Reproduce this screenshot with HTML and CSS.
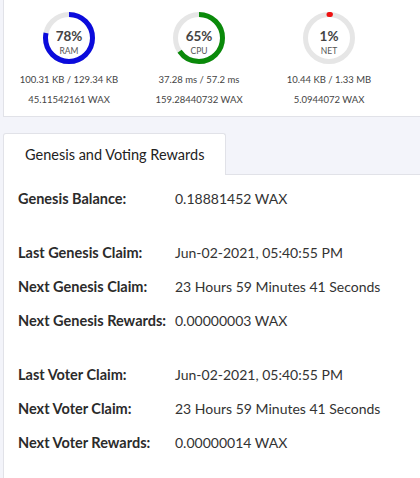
FILE: index.html
```html
<!DOCTYPE html>
<html>
<head>
<meta charset="utf-8">
<link rel="stylesheet" href="styles.css">
</head>
<body>
<div class="page">
  <div class="resources">
    <div class="res">
      <div class="gauge">
        <svg width="54" height="54" viewBox="0 0 54 54">
          <circle cx="27" cy="27" r="23.5" class="track"/>
          <circle cx="27" cy="27" r="23.5" class="arc blue" stroke-dasharray="115.2 147.7" transform="rotate(-90 27 27)"/>
        </svg>
        <div class="gtext"><span class="pct">78%</span><span class="glabel">RAM</span></div>
      </div>
      <div class="line">100.31 KB / 129.34 KB</div>
      <div class="line">45.11542161 WAX</div>
    </div>
    <div class="res">
      <div class="gauge">
        <svg width="54" height="54" viewBox="0 0 54 54">
          <circle cx="27" cy="27" r="23.5" class="track"/>
          <circle cx="27" cy="27" r="23.5" class="arc green" stroke-dasharray="96 147.7" transform="rotate(-90 27 27)"/>
        </svg>
        <div class="gtext"><span class="pct">65%</span><span class="glabel">CPU</span></div>
      </div>
      <div class="line">37.28 ms / 57.2 ms</div>
      <div class="line">159.28440732 WAX</div>
    </div>
    <div class="res">
      <div class="gauge">
        <svg width="54" height="54" viewBox="0 0 54 54">
          <circle cx="27" cy="27" r="23.5" class="track"/>
          <circle cx="27" cy="27" r="23.5" class="arc red" stroke-dasharray="1.5 147.7" transform="rotate(-90 27 27)"/>
        </svg>
        <div class="gtext"><span class="pct">1%</span><span class="glabel">NET</span></div>
      </div>
      <div class="line">10.44 KB / 1.33 MB</div>
      <div class="line">5.0944072 WAX</div>
    </div>
  </div>

  <div class="tabs">
    <div class="tab">Genesis and Voting Rewards</div>
    <div class="tabfill"></div>
  </div>
  <div class="panel">
    <div class="group">
      <div class="row"><span class="label">Genesis Balance:</span><span class="value">0.18881452 WAX</span></div>
    </div>
    <div class="group">
      <div class="row"><span class="label">Last Genesis Claim:</span><span class="value">Jun-02-2021, 05:40:55 PM</span></div>
      <div class="row"><span class="label">Next Genesis Claim:</span><span class="value">23 Hours 59 Minutes 41 Seconds</span></div>
      <div class="row"><span class="label">Next Genesis Rewards:</span><span class="value">0.00000003 WAX</span></div>
    </div>
    <div class="group">
      <div class="row"><span class="label">Last Voter Claim:</span><span class="value">Jun-02-2021, 05:40:55 PM</span></div>
      <div class="row"><span class="label">Next Voter Claim:</span><span class="value">23 Hours 59 Minutes 41 Seconds</span></div>
      <div class="row"><span class="label">Next Voter Rewards:</span><span class="value">0.00000014 WAX</span></div>
    </div>
  </div>
</div>
</body>
</html>
```
FILE: styles.css
```css
html, body {
  margin: 0;
  padding: 0;
  background: #f3f4fa;
  font-family: Lato, "Open Sans", sans-serif;
  color: #333;
}
.page {
  padding-left: 3px;
  height: 478px;
  overflow: hidden;
  display: flex;
  flex-direction: column;
}
.resources {
  background: #fff;
  border: 1px solid #e1e2e8;
  border-right: none;
  border-top: none;
  height: 117px;
  box-sizing: border-box;
  display: flex;
  padding-top: 11px;
}
.res {
  width: 130px;
  display: flex;
  flex-direction: column;
  align-items: center;
}
.gauge {
  position: relative;
  width: 54px;
  height: 54px;
}
.gauge svg { display: block; }
.track { fill: none; stroke: #e6e6e6; stroke-width: 5; }
.arc { fill: none; stroke-width: 5; }
.blue { stroke: #0b0bdc; }
.green { stroke: #0a8a0a; }
.red { stroke: #ee1111; stroke-linecap: round; }
.gtext {
  position: absolute;
  inset: 0;
  display: flex;
  flex-direction: column;
  align-items: center;
  justify-content: center;
  padding-top: 10px;
}
.pct {
  font-size: 13.5px;
  font-weight: 700;
  color: #444;
  line-height: 15px;
}
.glabel {
  font-size: 8.5px;
  color: #555;
  line-height: 14px;
}
.line {
  font-size: 9.5px;
  color: #444;
  margin-top: 8px;
  line-height: 14px;
}
.line + .line { margin-top: 6px; }
.tabs {
  display: flex;
  margin-top: 16px;
  height: 42px;
}
.tab {
  width: 223px;
  box-sizing: border-box;
  background: #fff;
  border: 1px solid #e1e2e8;
  border-bottom: none;
  border-radius: 3px 3px 0 0;
  font-size: 14.5px;
  color: #222;
  padding-left: 21px;
  padding-top: 12px;
}
.tabfill {
  flex: 1;
  border-bottom: 1px solid #e1e2e8;
}
.panel {
  flex: 1;
  background: #fff;
  border-left: 1px solid #e1e2e8;
  padding: 6px 0 0 14px;
  display: flex;
  flex-direction: column;
  gap: 20px;
}
.group {
  display: flex;
  flex-direction: column;
}
.row {
  display: flex;
  height: 34px;
  align-items: center;
  font-size: 14px;
}
.label {
  width: 157px;
  font-size: 14.5px;
  font-weight: 700;
  color: #2b2b2b;
}
.value {
  color: #333;
}
```
